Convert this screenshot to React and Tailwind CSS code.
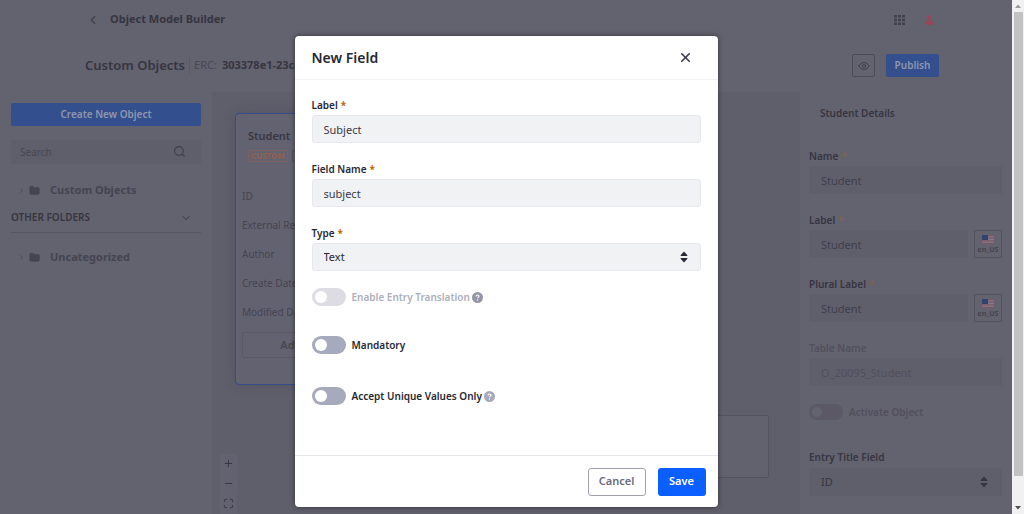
import React from 'react';
import { ChevronDown, ChevronLeft, ChevronRight, Eye, Folder, Maximize, Minus, Plus, Search, X } from 'lucide-react';

const Required = ({ dim }) => (
    <span className={dim ? 'ml-[3px] text-[#80624c]' : 'ml-[3px] font-bold text-[#bd6410]'}>*</span>
);

const SortArrows = ({ className }) => (
    <svg className={className} width="8" height="12" viewBox="0 0 8 12" fill="currentColor">
        <path d="M4 .5 7.4 4.2q.3.8-.5.8H1.1q-.8 0-.5-.8z" />
        <path d="M4 11.5.6 7.8Q.3 7 1.1 7h5.8q.8 0 .5.8z" />
    </svg>
);

const HelpIcon = ({ className }) => (
    <svg className={className} width="11" height="11" viewBox="0 0 11 11">
        <circle cx="5.5" cy="5.5" r="5.5" fill="currentColor" />
        <path d="M4 4.4c0-1.800 3-1.800 3-.1 0 1.100-1.500 1.100-1.500 2" fill="none" stroke="#fff" strokeWidth="1.100" />
        <circle cx="5.500" cy="7.900" r=".7" fill="#fff" />
    </svg>
);

const FlagIcon = () => (
    <svg width="12" height="9" viewBox="0 0 12 9">
        <rect width="12" height="9" fill="#827b8a" />
        <path d="M0 .6h12M0 3.200h12M0 5.800h12M0 8.400h12" stroke="#7d5663" strokeWidth="1.200" />
        <rect width="6" height="5" fill="#32426f" />
    </svg>
);

// Inputs of the modal form
const Field = ({ id, label, value }) => (
    <div className="mb-[18px]">
        <label htmlFor={id} className="mb-0.5 block text-[10px] leading-4 font-semibold text-[#272833]">
            {label}<Required />
        </label>
        <input
            id={id}
            defaultValue={value}
            className="block h-7 w-full rounded-[3px] border border-[#e7e7ed] bg-[#f1f2f4] px-[11px] text-[11px] text-[#393a4a] outline-none"
        />
    </div>
);

const Toggle = ({ id, label, disabled, help, className }) => (
    <div className={`flex h-[18px] items-center ${className}`}>
        <input
            id={id}
            type="checkbox"
            role="switch"
            disabled={disabled}
            className="flex h-[18px] w-[34px] shrink-0 appearance-none items-center rounded-full bg-[#a7a9bc] pl-[3px] before:size-3 before:rounded-full before:bg-white disabled:bg-[#dcdce2]"
        />
        <label
            htmlFor={id}
            className={`ml-1.5 text-[10px] font-semibold ${disabled ? 'text-[#aeafba]' : 'text-[#272833]'}`}
        >
            {label}
        </label>
        {help && <HelpIcon className={disabled ? 'ml-0.5 text-[#9495a6]' : 'ml-0.5 text-[#a7a9bc]'} />}
    </div>
);

const NewFieldModal = () => (
    <div role="dialog" aria-labelledby="modal-title" className="flex w-[423px] flex-col rounded bg-white shadow-[0_0_5px_rgba(0,0,0,0.5)]">
        <div className="flex h-11 items-center justify-between border-b border-[#f1f2f5] pr-[25px] pl-[17px]">
            <h1 id="modal-title" className="text-sm font-semibold text-[#272833]">New Field</h1>
            <button type="button" aria-label="Close" className="text-[#393a4a]">
                <X size={15} strokeWidth={2.5} />
            </button>
        </div>
        <form className="h-[375px] px-[17px] pt-[17px]">
            <Field id="label" label="Label" value="Subject" />
            <Field id="fieldName" label="Field Name" value="subject" />
            <label htmlFor="type" className="mb-0.5 block text-[10px] leading-4 font-semibold text-[#272833]">
                Type<Required />
            </label>
            <div className="relative">
                <select
                    id="type"
                    className="block h-7 w-full appearance-none rounded-[3px] border border-[#e7e7ed] bg-[#f1f2f4] px-[11px] text-[11px] text-[#272833]"
                >
                    <option>Text</option>
                </select>
                <SortArrows className="pointer-events-none absolute top-2 right-[13px] text-[#272833]" />
            </div>
            <Toggle id="translation" label="Enable Entry Translation" disabled help className="mt-[17px]" />
            <Toggle id="mandatory" label="Mandatory" className="mt-[30px]" />
            <Toggle id="unique" label="Accept Unique Values Only" help className="mt-[33px]" />
        </form>
        <div className="flex h-[52px] items-center justify-end gap-3 border-t border-[#e7e7ed] px-3">
            <button type="button" className="h-7 w-[58px] rounded-[3px] border border-[#a0a1a8] text-[11px] font-semibold text-[#6b6c7e]">
                Cancel
            </button>
            <button type="button" className="h-7 w-12 rounded-[3px] bg-[#0b5fff] text-[11px] font-semibold text-white">
                Save
            </button>
        </div>
    </div>
);

const FolderRow = ({ name }) => (
    <a href="#" className="flex h-5 items-center pl-[7px] text-[11px] font-bold text-[#45444f]">
        <ChevronRight size={7} strokeWidth={3} />
        <Folder size={11} fill="currentColor" className="ml-1" />
        <span className="ml-[10px]">{name}</span>
    </a>
);

const Sidebar = () => (
    <aside className="w-[212px] shrink-0 px-[11px] pt-[11px]">
        <button type="button" className="block h-[23px] w-full rounded-[2px] bg-[#344f8d] text-[10px] font-semibold text-[#8d97ae]">
            Create New Object
        </button>
        <div className="relative mt-[14px]">
            <input
                aria-label="Search"
                placeholder="Search"
                className="block h-6 w-full rounded-[2px] bg-[#5f5e6b] px-[9px] text-[10px] placeholder:text-[#474652]"
            />
            <Search size={13} className="absolute top-[5px] right-[15px] text-[#3d3c48]" />
        </div>
        <div className="mt-4"><FolderRow name="Custom Objects" /></div>
        <button type="button" className="mt-[5px] flex h-7 w-full items-center justify-between border-b border-[#565561] pr-[9px] pb-0.5 text-[10px] font-semibold text-[#363541]">
            OTHER FOLDERS
            <ChevronDown size={12} />
        </button>
        <div className="mt-[14px]"><FolderRow name="Uncategorized" /></div>
    </aside>
);

const nodeFields = ['ID', 'External Ref.', 'Author', 'Create Date', 'Modified Date'];

const Canvas = () => (
    <main className="relative min-w-0 flex-1 bg-[#5f5e6b]">
        <div className="absolute top-[21px] left-[23px] h-[272px] w-[140px] rounded border border-[#334d89] bg-[#636270] px-[6px] pt-3 shadow-[0_0_12px_rgba(40,40,60,0.2)]">
            <h2 className="pl-[6px] text-[11px] leading-5 font-semibold text-[#383743]">Student</h2>
            <div className="mt-1 flex gap-1 pl-[6px]">
                <span className="h-3 w-10 shrink-0 rounded-[2px] border border-[#80605e] text-center text-[8px] leading-[10px] font-bold text-[#92624f]">
                    CUSTOM
                </span>
                <span className="h-3 w-10 rounded-[2px] border border-[#53525e]" />
            </div>
            <ul className="mt-5 text-[10px] text-[#454450]">
                {nodeFields.map((field) => (
                    <li key={field} className="h-[29px] leading-[29px] whitespace-nowrap">{field}</li>
                ))}
            </ul>
            <button type="button" className="mt-[5px] block h-[26px] w-full rounded-[2px] border border-[#5a5965] text-[11px] font-semibold text-[#474652]">
                Add Field
            </button>
        </div>
        <div className="absolute right-[31px] bottom-9 h-[63px] w-[180px] rounded-[2px] border border-[#53525d] bg-[#62616e]" />
        <div className="absolute bottom-0 left-2 flex flex-col items-center gap-[9px] bg-[#636270] px-[3px] pt-1 pb-[5px] text-[#343340]">
            <button type="button" aria-label="Zoom in"><Plus size={11} /></button>
            <button type="button" aria-label="Zoom out"><Minus size={11} /></button>
            <button type="button" aria-label="Fit view"><Maximize size={11} /></button>
        </div>
    </main>
);

const DetailField = ({ id, label, value, required, locale, disabled }) => (
    <div className="mb-[18px]">
        <label
            htmlFor={id}
            className={`mb-0.5 block text-[10px] leading-4 font-semibold ${disabled ? 'text-[#51505c]' : 'text-[#363541]'}`}
        >
            {label}{required && <Required dim />}
        </label>
        <div className="flex gap-[6px]">
            <input
                id={id}
                defaultValue={value}
                disabled={disabled}
                className="h-7 w-full min-w-0 flex-1 rounded-[2px] bg-[#5f5e6b] px-3 text-[11px] text-[#41404c] disabled:text-[#51505c]"
            />
            {locale && (
                <button type="button" className="flex h-7 w-7 flex-col items-center justify-center gap-0.5 rounded-[2px] border border-[#53525e] text-[7px] leading-[7px] font-bold text-[#454450]">
                    <FlagIcon />
                    en_US
                </button>
            )}
        </div>
    </div>
);

const Details = () => (
    <aside className="w-[212px] shrink-0 pt-[11px] pr-[10px] pl-[9px]">
        <h2 className="mb-[25px] pl-[11px] text-[10px] leading-5 font-semibold text-[#363541]">Student Details</h2>
        <DetailField id="name" label="Name" value="Student" required />
        <DetailField id="detailLabel" label="Label" value="Student" required locale />
        <DetailField id="pluralLabel" label="Plural Label" value="Student" required locale />
        <DetailField id="tableName" label="Table Name" value="O_20095_Student" disabled />
        <div className="flex items-center">
            <input
                id="activate"
                type="checkbox"
                role="switch"
                disabled
                className="flex h-4 w-[34px] appearance-none items-center rounded-full bg-[#5a5965] pl-[3px] before:size-[10px] before:rounded-full before:bg-[#63626f]"
            />
            <label htmlFor="activate" className="ml-[6px] text-[10px] font-semibold text-[#51505c]">Activate Object</label>
        </div>
        <label htmlFor="titleField" className="mt-[29px] mb-[3px] block text-[10px] leading-4 font-semibold text-[#363541]">
            Entry Title Field
        </label>
        <div className="relative">
            <select id="titleField" className="block h-7 w-full appearance-none rounded-[2px] bg-[#5f5e6b] px-3 text-[11px] text-[#363541]">
                <option>ID</option>
            </select>
            <SortArrows className="pointer-events-none absolute top-2 right-[14px] text-[#363541]" />
        </div>
    </aside>
);

const Header = () => (
    <header className="shrink-0">
        <div className="flex h-[39px] items-center pr-[78px] pl-[86px]">
            <button type="button" aria-label="Back" className="text-[#41404c]"><ChevronLeft size={14} /></button>
            <span className="ml-[10px] text-[11px] font-bold text-[#363541]">Object Model Builder</span>
            <button type="button" aria-label="Applications" className="ml-auto text-[#41404c]">
                <svg width="11" height="10" viewBox="0 0 11 10" fill="currentColor">
                    <path d="M0 0h3v2.500H0zM4 0h3v2.500H4zM8 0h3v2.500H8zM0 3.700h3v2.500H0zM4 3.700h3v2.500H4zM8 3.700h3v2.500H8zM0 7.500h3V10H0zM4 7.500h3V10H4zM8 7.500h3V10H8z" />
                </svg>
            </button>
            <button type="button" aria-label="User" className="ml-5 text-[#964654]">
                <svg width="9" height="10" viewBox="0 0 10 11" fill="currentColor">
                    <circle cx="5" cy="2.700" r="2.500" />
                    <path d="M3.500 5h3v1.200Q9.500 7 9.500 9.500 9.500 11 5 11T.5 9.500Q.5 7 3.500 6.200z" />
                </svg>
            </button>
        </div>
        <div className="flex h-[53px] items-center pr-[73px] pl-[85px]">
            <h1 className="text-[13px] font-semibold text-[#363541]">Custom Objects</h1>
            <span className="ml-1 border-l border-[#5b5a66] pl-1 text-[11px] text-[#484753]">ERC:</span>
            <span className="ml-[5px] text-[11px] font-bold text-[#363541]">303378e1-23c4</span>
            <button type="button" aria-label="Preview" className="ml-auto flex h-[23px] w-[23px] items-center justify-center rounded-[2px] border border-[#4b4a56] text-[#3f3e4a]">
                <Eye size={12} />
            </button>
            <button type="button" className="ml-[11px] h-[23px] w-[53px] rounded-[2px] bg-[#344f8d] text-[10px] font-semibold text-[#8d97ae]">
                Publish
            </button>
        </div>
    </header>
);

const Scrollbar = () => (
    <div className="flex w-3 shrink-0 flex-col items-center bg-[#f1f1f1]">
        <svg width="12" height="12" viewBox="0 0 12 12"><path d="M6 4.500 9 8H3z" fill="#9a9a9a" /></svg>
        <div className="w-[9px] flex-1 bg-[#c1c2c1]" />
        <svg className="mt-6" width="12" height="14" viewBox="0 0 12 14"><path d="M6 9.500 9 6H3z" fill="#505050" /></svg>
    </div>
);

function App() {
    return (
        <div className="flex h-screen overflow-hidden font-['Noto_Sans',sans-serif]">
            <div className="relative flex min-w-0 flex-1 flex-col bg-[#63626f]">
                <Header />
                <div className="flex min-h-0 flex-1">
                    <Sidebar />
                    <Canvas />
                    <Details />
                </div>
                <div className="absolute inset-0 flex items-start justify-center pt-9">
                    <NewFieldModal />
                </div>
            </div>
            <Scrollbar />
        </div>
    );
}

export default App;
